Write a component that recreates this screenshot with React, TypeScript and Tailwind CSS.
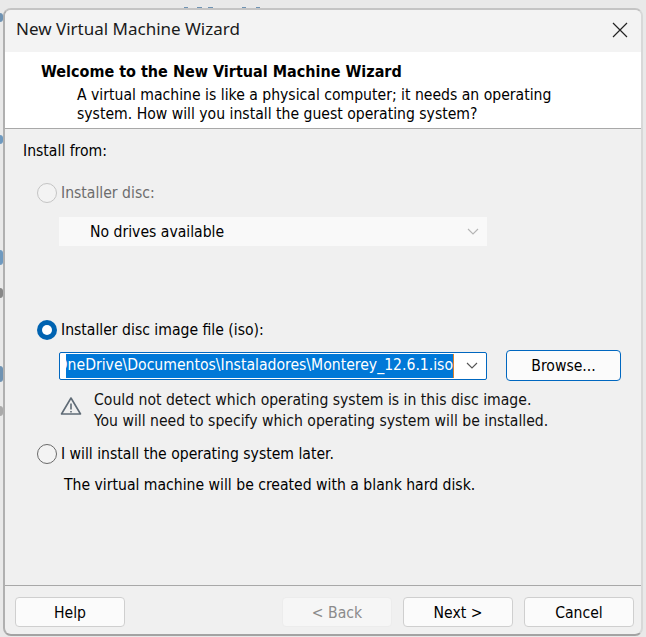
const font = "font-['DejaVu_Sans_Condensed','DejaVu_Sans',sans-serif]"

const Chevron = ({ color }: { color: string }) => (
    <svg width="12" height="7" viewBox="0 0 12 7" fill="none" stroke={color} strokeWidth="1.1">
        <path d="M1 1l5 5 5-5" />
    </svg>
)

const Radio = ({ state }: { state: "off" | "on" | "disabled" }) => {
    if (state === "on") {
        return (
            <span className="flex h-5 w-5 items-center justify-center rounded-full bg-[#0063b1]">
                <span className="h-2.5 w-2.5 rounded-full bg-white" />
            </span>
        )
    }
    return (
        <span className={state === "off"
            ? "h-5 w-5 rounded-full border border-[#6a6a6a] bg-[#f3f3f3]"
            : "h-5 w-5 rounded-full border border-[#c4c4c4] bg-[#f3f3f3]"} />
    )
}

const Button = ({ label, disabled }: { label: string; disabled?: boolean }) => (
    <button className={`h-[30px] w-[110px] rounded-[4px] border pt-[3px] text-[15.6px] ${disabled
        ? "border-[#ececec] bg-[#f6f6f6] text-[#8b8b8b]"
        : "border-[#cfcfcf] bg-[#fbfbfb] text-black"}`}>
        {label}
    </button>
)

export default function App() {
    return (
        <div className={`relative flex h-[637px] w-[646px] overflow-hidden bg-[#e9e9e9] pt-2 pl-[3px] pr-[3px] ${font}`}>
            {/* bits of the window behind, peeking out round the edges */}
            <div className="absolute top-[13px] left-0 h-[9px] w-[3px] rounded-r-sm bg-[#6f93b3]" />
            <div className="absolute top-[135px] left-0 h-[9px] w-[3px] rounded-r-sm bg-[#6f9ac0]" />
            <div className="absolute top-[250px] left-0 h-[15px] w-[3px] rounded-r-sm bg-[#6f9ac0]" />
            <div className="absolute top-[288px] left-0 h-[10px] w-[3px] rounded-r-sm bg-[#888]" />
            <div className="absolute top-[366px] left-0 h-[16px] w-[3px] rounded-r-sm bg-[#6f93b3]" />
            <div className="absolute top-[406px] left-0 h-[10px] w-[3px] rounded-r-sm bg-[#aaa]" />
            <div className="absolute top-[7px] left-[184px] h-[2px] w-[4px] bg-[#6f93b3]" />
            <div className="absolute top-[7px] left-[197px] h-[2px] w-[5px] bg-[#6f93b3]" />
            <div className="absolute top-[7px] left-[208px] h-[2px] w-[5px] bg-[#6f93b3]" />
            <div className="absolute top-[7px] left-[242px] h-[2px] w-[4px] bg-[#6f93b3]" />
            <div className="absolute top-[7px] left-[256px] h-[2px] w-[4px] bg-[#6f93b3]" />
            <div className="relative flex h-[628px] w-[640px] flex-col overflow-hidden rounded-lg border-t-2 border-r-2 border-b-2 border-l-2 border-t-[#c4c4c4] border-r-[#d8d8d8] border-b-[#a3a3a3] border-l-[#b0b0b0] bg-[#f0f0f0]">
                <div className="flex h-[42px] shrink-0 items-start justify-between bg-[#f3f3f3] pt-[7px] pr-[13px] pl-[11px]">
                    <span className="font-['Noto_Sans',sans-serif] text-[17px] leading-[23px] text-[#1a1a1a]">New Virtual Machine Wizard</span>
                    <svg className="mt-[5px]" width="16" height="16" viewBox="0 0 16 16" fill="none" stroke="#222" strokeWidth="1.2">
                        <path d="M1 1l14 14M15 1L1 15" />
                    </svg>
                </div>
                <div className="h-[77px] shrink-0 border-b border-[#a8a8a8] bg-white pt-[8px] text-black">
                    <p className="pl-[36px] text-[16px] leading-[24px] font-bold">Welcome to the New Virtual Machine Wizard</p>
                    <p className="mt-[2px] pl-[72px] text-[15.6px] leading-[19px]">A virtual machine is like a physical computer; it needs an operating<br />system. How will you install the guest operating system?</p>
                </div>
                <div className="flex flex-1 flex-col pt-[12px] pl-[18px] text-[15.6px] text-black">
                    <p className="leading-[20px]">Install from:</p>
                    <div className="mt-[22px] flex items-center gap-[4px] pl-[14px] leading-[20px] text-[#6d6d6d]">
                        <Radio state="disabled" />
                        Installer disc:
                    </div>
                    <div className="mt-[14px] ml-[36px] flex h-[29px] w-[428px] items-center justify-between bg-[#f9f9f9] pr-[8px] pl-[31px] text-black">
                        <span className="mt-[3px]">No drives available</span>
                        <Chevron color="#b5b5b5" />
                    </div>
                    <div className="mt-[74px] flex items-center gap-[4px] pl-[14px] leading-[20px]">
                        <Radio state="on" />
                        Installer disc image file (iso):
                    </div>
                    <div className="mt-[10px] ml-[36px] flex items-center gap-[19px]">
                        <div className="flex h-[28px] w-[428px] items-center justify-between rounded-[2px] border border-[#0067c0] bg-white pr-[8px] pl-[6px]">
                            <span className="mt-[1px] w-[388px] overflow-hidden whitespace-nowrap border-r border-r-[#d9822b] bg-[#0078d7] text-white [direction:rtl]">
                                <span className="[unicode-bidi:plaintext]">OneDrive\Documentos\Instaladores\Monterey_12.6.1.iso</span>
                            </span>
                            <Chevron color="#555" />
                        </div>
                        <button className="h-[31px] w-[115px] rounded-[4px] border border-[#0067c0] bg-[#fbfbfb] pt-[3px]">Browse...</button>
                    </div>
                    <div className="mt-[9px] ml-[37px] flex gap-[12px]">
                        <svg className="mt-[6px]" width="22" height="20" viewBox="0 0 22 20" fill="none" stroke="#5f6b76" strokeWidth="1.6">
                            <path d="M11 2L1.5 18h19z" strokeLinejoin="round" />
                            <path d="M11 7.5v6M11 15v1.6" />
                        </svg>
                        <p className="leading-[21px] text-[#111]">Could not detect which operating system is in this disc image.<br />You will need to specify which operating system will be installed.</p>
                    </div>
                    <div className="mt-[12px] flex items-center gap-[4px] pl-[14px] leading-[20px]">
                        <Radio state="off" />
                        I will install the operating system later.
                    </div>
                    <p className="mt-[11px] pl-[41px] leading-[20px]">The virtual machine will be created with a blank hard disk.</p>
                </div>
                <div className="flex h-[49px] shrink-0 items-start border-t border-[#a8a8a8] pt-[11px] pr-[7px] pl-[10px]">
                    <Button label="Help" />
                    <div className="ml-auto flex gap-[11px]">
                        <Button label="< Back" disabled />
                        <Button label="Next >" />
                        <Button label="Cancel" />
                    </div>
                </div>
            </div>
        </div>
    )
}
